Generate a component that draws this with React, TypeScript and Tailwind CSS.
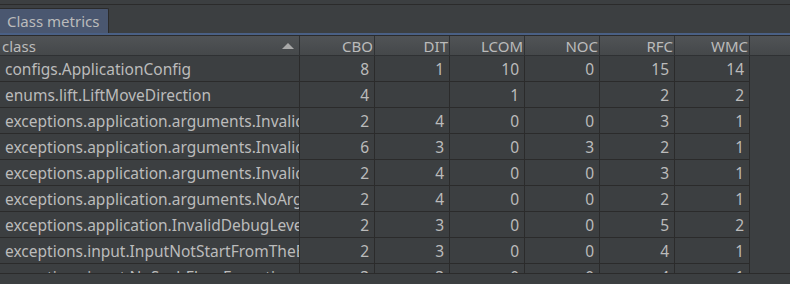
import React from "react";

const columns = ["CBO", "DIT", "LCOM", "NOC", "RFC", "WMC"];

// class name + metric values (blank = no value)
const rows: [string, string[]][] = [
  ["configs.ApplicationConfig", ["8", "1", "10", "0", "15", "14"]],
  ["enums.lift.LiftMoveDirection", ["4", "", "1", "", "2", "2"]],
  ["exceptions.application.arguments.InvalidArgumentException", ["2", "4", "0", "0", "3", "1"]],
  ["exceptions.application.arguments.InvalidCommandException", ["6", "3", "0", "3", "2", "1"]],
  ["exceptions.application.arguments.InvalidOptionException", ["2", "4", "0", "0", "3", "1"]],
  ["exceptions.application.arguments.NoArgumentException", ["2", "4", "0", "0", "2", "1"]],
  ["exceptions.application.InvalidDebugLevelException", ["2", "3", "0", "0", "5", "2"]],
  ["exceptions.input.InputNotStartFromTheBeginning", ["2", "3", "0", "0", "4", "1"]],
  ["exceptions.input.NoSuchFloorException", ["3", "3", "0", "0", "4", "1"]],
];

const App = () => {
  return (
    <div className="w-[790px] h-[284px] bg-[#3c3f41] overflow-hidden flex flex-col text-[#bbbbbb] font-['Noto_Sans',sans-serif]">
      {/* top strip */}
      <div className="h-[4px] shrink-0 bg-[#3c3f41]" />
      <div className="h-px shrink-0 bg-[#2b2b2b]" />
      {/* tabs */}
      <div className="h-[28px] shrink-0 flex items-end">
        <div className="h-[25px] w-[109px] bg-[#4a5770] border-r border-t border-[#2b2b2b] flex items-center pl-[7px] pt-[1px] text-[15px] leading-none rounded-tr-[2px]">
          Class metrics
        </div>
      </div>
      <div className="h-[2px] shrink-0 bg-[#4a6085]" />
      <div className="h-px shrink-0 bg-[#2b2b2b]" />
      {/* table */}
      <div className="h-[237px] shrink-0 overflow-hidden">
        <div className="h-[20px] flex bg-gradient-to-b from-[#505356] to-[#45484a] border-b border-[#2f3133] text-[15px] leading-none">
          <div className="w-[300px] shrink-0 flex items-center justify-between pl-[2px] pr-[5px] border-r border-[#2f3133]">
            <span className="pt-[2px]">class</span>
            <svg width="12" height="8" viewBox="0 0 12 8">
              <polygon points="0,7 6,1 12,7" fill="#a8a8a8" />
            </svg>
          </div>
          {columns.map((c) => (
            <div
              key={c}
              className="w-[75px] shrink-0 flex items-center justify-end pr-[1px] pt-[2px] border-r border-[#2f3133]"
            >
              {c}
            </div>
          ))}
          <div className="flex-1" />
        </div>
        {rows.map(([name, vals], i) => (
          <div key={i} className="h-[26px] flex text-[15.5px]">
            <div className="w-[750px] shrink-0 flex border-b border-[#2b2b2b]">
              <div className="w-[300px] shrink-0 pl-[5px] pt-[2px] flex items-center overflow-hidden whitespace-nowrap border-r border-[#2b2b2b]">
                {name}
              </div>
              {vals.map((v, j) => (
                <div
                  key={j}
                  className="w-[75px] shrink-0 flex items-center justify-end pr-[5px] pt-[2px] border-r border-[#2b2b2b]"
                >
                  {v}
                </div>
              ))}
            </div>
            <div className="flex-1" />
          </div>
        ))}
      </div>
      <div className="h-px shrink-0 bg-[#2b2b2b]" />
      <div className="flex-1 bg-[#3c3f41]" />
    </div>
  );
};

export default App;
